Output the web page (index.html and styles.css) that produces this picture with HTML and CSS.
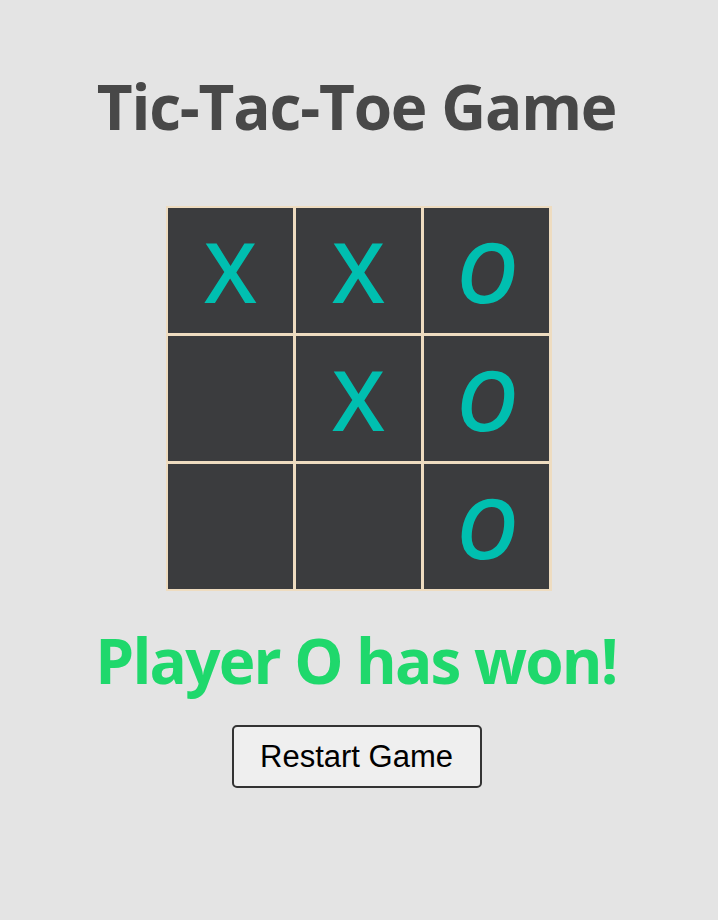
FILE: index.html
```html
<!DOCTYPE html>
<html>
<head>
<meta charset="utf-8">
<link rel="stylesheet" href="styles.css">
</head>
<body>
<main class="game">
  <h1 class="title">Tic-Tac-Toe Game</h1>
  <div class="board">
    <div class="cell"><span class="mark x">X</span></div>
    <div class="cell"><span class="mark x">X</span></div>
    <div class="cell"><span class="mark o">O</span></div>
    <div class="cell"></div>
    <div class="cell"><span class="mark x">X</span></div>
    <div class="cell"><span class="mark o">O</span></div>
    <div class="cell"></div>
    <div class="cell"></div>
    <div class="cell"><span class="mark o">O</span></div>
  </div>
  <p class="status">Player O has won!</p>
  <button class="restart">Restart Game</button>
</main>
</body>
</html>
```
FILE: styles.css
```css
html, body {
  margin: 0;
  padding: 0;
  background: #e4e4e4;
}
.game {
  display: flex;
  flex-direction: column;
  align-items: center;
  padding-top: 63px;
  font-family: "Open Sans", "Noto Sans", sans-serif;
}
.title {
  margin: 0 5px 0 0;
  font-size: 62px;
  font-weight: 700;
  line-height: 87px;
  color: #484848;
  letter-spacing: -1.2px;
}
.board {
  margin-top: 56px;
  display: grid;
  grid-template-columns: repeat(3, 125px);
  grid-template-rows: repeat(3, 125px);
  gap: 3px;
  padding: 2px 3px 2px 2px;
  background: #eedcc0;
}
.cell {
  background: #3b3c3e;
  display: flex;
  align-items: center;
  justify-content: center;
}
.mark {
  color: #00bfb0;
  font-size: 84px;
  line-height: 1;
  font-family: "Open Sans", sans-serif;
  font-weight: 600;
  padding-top: 0;
}
.mark.o {
  font-style: italic;
}
.status {
  margin: 26px 6px 0 0;
  font-size: 62px;
  font-weight: 700;
  line-height: 87px;
  color: #1fd86c;
  letter-spacing: -1.8px;
}
.restart {
  margin: 21px 5px 0 0;
  width: 250px;
  height: 63px;
  background: #efefef;
  border: 2px solid #333333;
  border-radius: 5px;
  font-family: "Liberation Sans", Arial, sans-serif;
  font-size: 31px;
  color: #000;
  padding: 0;
}
```
